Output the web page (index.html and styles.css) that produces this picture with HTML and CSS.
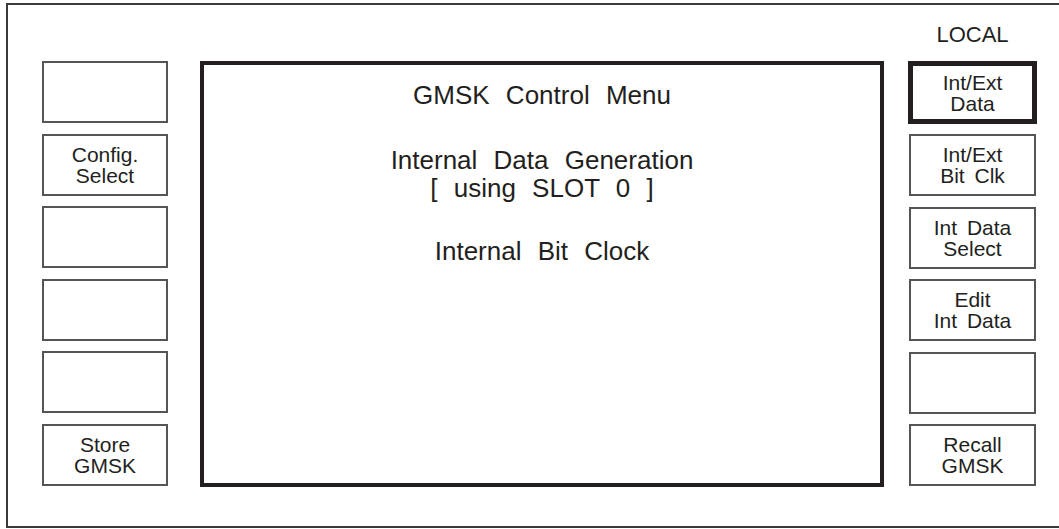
FILE: index.html
```html
<!doctype html>
<html lang="en">
<head>
    <meta charset="UTF-8">
    <title>GMSK Control Menu</title>
    <link rel="stylesheet" href="styles.css">
</head>
<body>
    <div class="panel">
        <div class="status">LOCAL</div>

        <div class="keys left">
            <div class="key"></div>
            <div class="key">Config.<br>Select</div>
            <div class="key"></div>
            <div class="key"></div>
            <div class="key"></div>
            <div class="key">Store<br>GMSK</div>
        </div>

        <div class="screen">
            <div class="title">GMSK Control Menu</div>
            <div class="line data">Internal Data Generation<br>[ using SLOT 0 ]</div>
            <div class="line clock">Internal Bit Clock</div>
        </div>

        <div class="keys right">
            <div class="key active">Int/Ext<br>Data</div>
            <div class="key">Int/Ext<br>Bit Clk</div>
            <div class="key">Int Data<br>Select</div>
            <div class="key">Edit<br>Int Data</div>
            <div class="key"></div>
            <div class="key">Recall<br>GMSK</div>
        </div>
    </div>
</body>
</html>
```

FILE: styles.css
```css
*{margin: 0; padding: 0; box-sizing: border-box;}
html, body{width: 100%; height: 100%; overflow: hidden;}
body{background: #fff; color: #231f20; font-family: "Liberation Sans", Arial, sans-serif;}

.panel{margin: 3px 0 0 6px; height: 525px; border: 2px solid #3a3a3a; border-right: 0; padding-left: 34px; display: grid; grid-template-columns: 126px 32px 684px 24px 129px; grid-template-rows: 56px 426px;}

.status{grid-column: 5; grid-row: 1; text-align: center; font-size: 22px; line-height: 24px; padding-top: 18px;}

.keys{grid-row: 2; height: 425px; display: flex; flex-direction: column; justify-content: space-between;}
.keys.left{grid-column: 1;}
.keys.right{grid-column: 5; padding: 0 1px;}

.key{height: 62px; border: 2px solid #555; display: flex; align-items: center; justify-content: center; text-align: center; font-size: 21px; line-height: 21px; word-spacing: 4px;}
.key.active{height: 63px; margin: 0 -1px; border: 5px solid #231f20;}

.screen{grid-column: 3; grid-row: 2; border: 4px solid #231f20; text-align: center; font-size: 26px; line-height: 28px; word-spacing: 9px; padding-top: 16px;}
.screen .data{margin-top: 37px;}
.screen .clock{margin-top: 35px;}
```
